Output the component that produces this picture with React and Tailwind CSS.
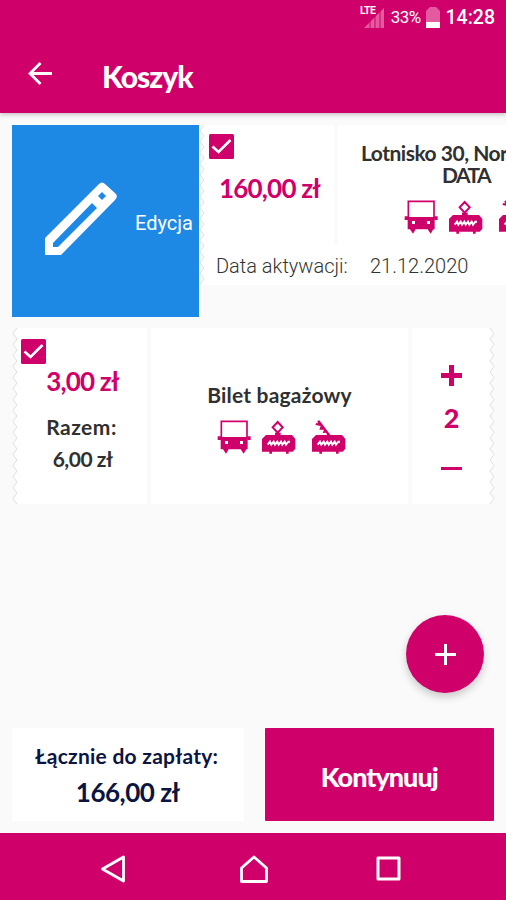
import React from "react";

const BusIcon = () => (
    <svg width="34" height="34" viewBox="0 0 102 102" className="shrink-0 text-[#d0006a]">
        <path d="M13 4H90V54H13Z" fill="none" stroke="currentColor" strokeWidth="5" />
        <path d="M11 51H92V88H88L80 101L71 88H35L27 101L18 88H11Z" fill="currentColor" />
        <path d="M2 49H12V60H2ZM91 49H101V60H91Z" fill="currentColor" />
        <path d="M24 63H33V72H24ZM69 63H78V72H69Z" fill="#fff" />
    </svg>
);

const TramBody = () => (
    <>
        <path d="M12 45H90L100 57V86L92 95H80V101H72V95H30V101H22V95H0V57Z" fill="currentColor" />
        <path d="M17 74L24 65L28 74L35 65L39 74L46 65L50 74L57 65L61 74L68 65L72 74L79 65L84 65" fill="none" stroke="#fff" strokeWidth="6" />
    </>
);

const TramIcon = () => (
    <svg width="34" height="34" viewBox="0 0 102 102" className="shrink-0 text-[#d0006a]">
        <path d="M47 6L62 22L47 38L32 22Z" fill="none" stroke="currentColor" strokeWidth="6" />
        <path d="M39 38H56V46H39Z" fill="currentColor" />
        <TramBody />
    </svg>
);

const RailIcon = () => (
    <svg width="34" height="34" viewBox="0 0 102 102" className="shrink-0 text-[#d0006a]">
        <path d="M22 1L56 46H46L42 38L32 39L36 29L22 29L26 18L10 15L13 9L18 10L16 3Z" fill="currentColor" />
        <TramBody />
    </svg>
);

const Vehicles = () => (
    <div className="flex">
        <BusIcon />
        <div className="ml-[11px] flex"><TramIcon /></div>
        <div className="ml-[16px] flex"><RailIcon /></div>
    </div>
);

const Checkbox = () => (
    <svg width="25" height="25" viewBox="0 0 25 25">
        <rect width="25" height="25" rx="1.5" fill="#d0006a" />
        <path d="M3.5 12.5L9.5 18L21.5 6" fill="none" stroke="#fff" strokeWidth="2.6" />
    </svg>
);

// Perforated ticket edge, one tooth every 11px
const Edge = ({ teeth, flip }) => {
    let d = flip ? "M1 0" : "M5 0";
    for (let i = 0; i < teeth; i++) {
        d += flip ? `L5 ${i * 11 + 5.5}L1 ${i * 11 + 11}` : `L1 ${i * 11 + 5.5}L5 ${i * 11 + 11}`;
    }
    const side = flip ? "L0 " + teeth * 11 + "L0 0Z" : "L6 " + teeth * 11 + "L6 0Z";
    return (
        <svg width="6" height={teeth * 11} className="shrink-0">
            <path d={d + side} fill="#fff" />
            <path d={d} fill="none" stroke="#e0e0e0" strokeWidth="1" />
        </svg>
    );
};

const Divider = () => <div className="w-[4px] shrink-0 bg-[#fafafa]" />;

const StatusBar = () => (
    <div className="flex h-9 items-center justify-end pr-[11px] font-[Roboto] text-white">
        <svg width="25" height="25" viewBox="0 0 25 25" className="-mt-[4px] mr-[6px]">
            <path d="M4 24L24 4V24Z" fill="#e45a9f" />
            <path d="M10 16V24M15 11V24M20 6V24" stroke="#d0006a" strokeWidth="1" />
            <text x="0" y="9.5" fontSize="10.5" fontWeight="700" fill="#fff" textLength="16">LTE</text>
        </svg>
        <span className="text-[17px] font-normal tracking-[-0.6px]">33%</span>
        <svg width="14" height="21" viewBox="0 0 14 21" className="-mt-[2px] mr-[6px] ml-[5px]">
            <path d="M4 0H10L14 4V15H0V4Z" fill="#e45a9f" />
            <path d="M0 15H14V21H0Z" fill="#fff" />
        </svg>
        <span className="text-[19.5px] font-medium">14:28</span>
    </div>
);

export default function App() {
    return (
        <div className="flex h-[900px] w-[506px] flex-col overflow-hidden bg-[#fafafa] font-[Lato,sans-serif] font-bold text-[#303030]">
            <header className="z-10 h-[113px] shrink-0 bg-[#d0006a] shadow-[0_2px_4px_rgba(0,0,0,0.2)]">
                <StatusBar />
                <div className="flex h-[77px] items-center pl-[28px] text-white">
                    <svg width="25" height="25" viewBox="0 0 25 25" className="-mt-0.5">
                        <path d="M24 12.5H3M12.5 2L2 12.5L12.5 23" fill="none" stroke="#fff" strokeWidth="2.8" />
                    </svg>
                    <h1 className="mt-[3px] ml-[49px] text-[30px] font-black tracking-[-1px]">Koszyk</h1>
                </div>
            </header>

            <main className="flex-1 pt-3">
                <div className="ml-3 flex h-[192px] w-[494px] items-start overflow-hidden">
                    <button className="flex h-[192px] w-[187px] shrink-0 items-center bg-[#1e88e5] font-[Roboto] text-[20px] font-normal text-white">
                        <svg width="74" height="74" viewBox="0 0 74 74" className="-mt-[4px] ml-[32px] shrink-0">
                            <path fillRule="evenodd" fill="#fff" d="M1 56L55 2Q58 -1 61 2L72 12Q74 15 71 18L17 73H1ZM9 61V65H14L53 26L48 21ZM58 10L54 14L58 18L62 14Z" />
                        </svg>
                        <span className="mt-[4px] ml-[17px]">Edycja</span>
                    </button>
                    <section className="flex h-[160px] w-[480px] shrink-0 overflow-hidden">
                        <Edge teeth={15} />
                        <div className="w-[480px] bg-white">
                            <div className="flex h-[120px]">
                                <div className="w-[129px] shrink-0 pt-[9px] pl-[4px]">
                                    <Checkbox />
                                    <p className="mt-[12px] pl-[10px] text-[26px] leading-[34px] tracking-[-0.8px] whitespace-nowrap text-[#d0006a]">160,00 zł</p>
                                </div>
                                <Divider />
                                <div className="w-[257px] shrink-0 pt-[17px]">
                                    <div className="pl-[23px] text-[21px] leading-[22px] tracking-[-0.5px] whitespace-nowrap">
                                        Lotnisko 30, Nor
                                        <p className="pl-[81px] tracking-[-1.6px]">DATA</p>
                                    </div>
                                    <div className="mt-[14px] pl-[66px]"><Vehicles /></div>
                                </div>
                            </div>
                            <div className="flex pt-[6px] pl-[11px] font-[Roboto] text-[20px] leading-[30px] font-light text-[#333]">
                                <span className="w-[154px]">Data aktywacji:</span>
                                <span>21.12.2020</span>
                            </div>
                        </div>
                    </section>
                </div>

                <section className="mt-[11px] ml-3 flex h-[176px] w-[483px]">
                    <Edge teeth={16} />
                    <div className="w-[129px] bg-white pt-[11px]">
                        <div className="pl-[3px]"><Checkbox /></div>
                        <div className="text-center whitespace-nowrap">
                            <p className="text-[26px] leading-[34px] tracking-[-0.8px] text-[#d0006a]">3,00 zł</p>
                            <p className="mt-[13px] pr-[2px] text-[21px] leading-[32px] tracking-[0.5px]">Razem:</p>
                            <p className="text-[21px] leading-[32px] tracking-[-0.5px]">6,00 zł</p>
                        </div>
                    </div>
                    <Divider />
                    <div className="flex w-[257px] flex-col bg-white pt-[54px]">
                        <p className="text-center text-[21px] leading-[26px] tracking-[0.2px]">Bilet bagażowy</p>
                        <div className="mt-[12px] pl-[66px]"><Vehicles /></div>
                    </div>
                    <Divider />
                    <div className="flex w-[77px] flex-col items-center bg-white pt-[37px] pl-[2px] text-[#d0006a]">
                        <svg width="21" height="21" viewBox="0 0 21 21">
                            <path d="M0 10.5H21M10.5 0V21" stroke="currentColor" strokeWidth="5" />
                        </svg>
                        <span className="my-[14px] text-[27px] leading-[36px] font-black">2</span>
                        <div className="mt-[17px] h-[3px] w-[21px] bg-[#d0006a]" />
                    </div>
                    <Edge teeth={16} flip />
                </section>
            </main>

            <div className="flex justify-end pr-[22px] pb-[35px]">
                <button className="flex h-[78px] w-[78px] items-center justify-center rounded-full bg-[#d0006a] shadow-[0_4px_8px_rgba(0,0,0,0.2)]">
                    <svg width="21" height="21" viewBox="0 0 21 21">
                        <path d="M0 10.5H21M10.5 0V21" stroke="#fff" strokeWidth="3" />
                    </svg>
                </button>
            </div>

            <div className="flex h-[105px] shrink-0 items-start gap-[21px] px-3">
                <div className="h-[93px] w-[232px] bg-white pt-[13px] text-center whitespace-nowrap text-[#0c1440]">
                    <p className="pr-[2px] text-[21px] leading-[30px] tracking-[0.25px]">Łącznie do zapłaty:</p>
                    <p className="mt-[4px] text-[26px] leading-[34px] tracking-[-0.5px]">166,00 zł</p>
                </div>
                <button className="h-[93px] w-[230px] rounded-[1px] bg-[#d0006a] pt-1.5 text-[27px] font-black tracking-[-1px] text-white">Kontynuuj</button>
            </div>

            <nav className="flex h-[67px] shrink-0 items-center bg-[#d0006a] pt-1 pl-[100px]">
                <svg width="26" height="28" viewBox="0 0 26 28" fill="none" stroke="#fff" strokeWidth="2.8" strokeLinejoin="round">
                    <path d="M23.5 2V26L2.5 14Z" />
                </svg>
                <svg width="28" height="28" viewBox="0 0 28 28" fill="none" stroke="#fff" strokeWidth="2.8" strokeLinejoin="round" className="ml-[114px]">
                    <path d="M14 2L26.5 13V26.5H1.5V13Z" />
                </svg>
                <svg width="25" height="25" viewBox="0 0 25 25" fill="none" stroke="#fff" strokeWidth="3" strokeLinejoin="round" className="ml-[108px]">
                    <path d="M2 2H23V23H2Z" />
                </svg>
            </nav>
        </div>
    );
}
